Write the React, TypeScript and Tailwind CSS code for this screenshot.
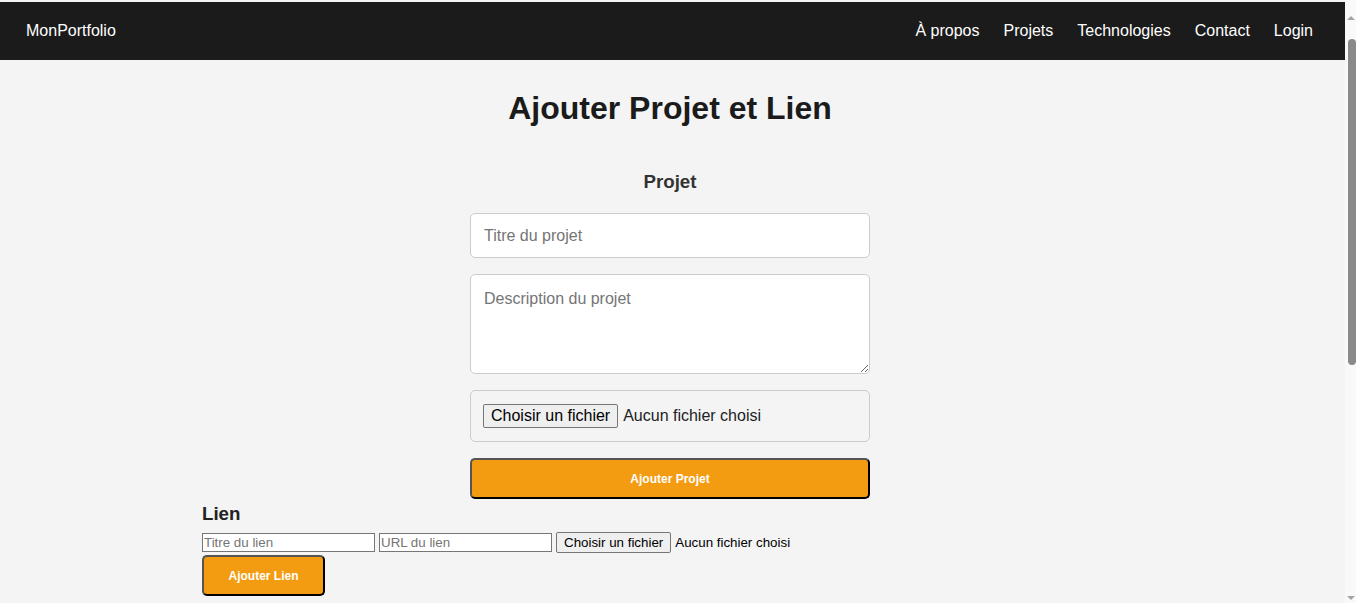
export default function App() {
  return (
    <div className="flex min-h-[603px] bg-[#f4f4f4] font-['Liberation_Sans',Arial,sans-serif] text-[#222]">
      <div className="flex-1 pt-[2px]">
        {/* barre de navigation */}
        <nav className="flex h-[58px] items-center justify-between bg-[#1b1b1b] pl-[26px] pr-[32px] text-[16px] text-white">
          <span>MonPortfolio</span>
          <ul className="flex items-center gap-[24px]">
            <li>À propos</li>
            <li>Projets</li>
            <li>Technologies</li>
            <li>Contact</li>
            <li>Login</li>
          </ul>
        </nav>

        <main className="ml-[202px] w-[936px]">
          <h1 className="mt-[30px] text-center text-[32px] font-bold leading-[37px] text-[#1b1b1b]">
            Ajouter Projet et Lien
          </h1>

          {/* formulaire projet */}
          <form className="mx-auto mt-[44px] flex w-[400px] flex-col">
            <h3 className="text-center text-[18.72px] font-bold leading-[22px] text-[#333]">
              Projet
            </h3>
            <input
              placeholder="Titre du projet"
              className="mt-[20px] h-[45px] rounded-[5px] border border-[#ccc] bg-white px-[13px] text-[16px] outline-none placeholder:text-[#757575]"
            />
            <textarea
              placeholder="Description du projet"
              className="mt-[16px] h-[100px] rounded-[5px] border border-[#ccc] bg-white px-[13px] pt-[12px] text-[16px] outline-none placeholder:text-[#757575]"
            />
            <div className="mt-[16px] flex h-[52px] items-center gap-[5px] rounded-[5px] border border-[#ccc] bg-[#f4f4f4] px-[12px]">
              <span className="flex h-[24px] items-center rounded-[2px] border border-[#767676] bg-[#efefef] px-[7px] text-[16px] text-black">
                Choisir un fichier
              </span>
              <span className="text-[16px] text-[#222]">Aucun fichier choisi</span>
            </div>
            <button
              type="button"
              className="mt-[16px] h-[41px] rounded-[5px] border-2 border-black border-t-[#555] border-l-[#555] bg-[#f39c12] text-[12px] font-bold text-white"
            >
              Ajouter Projet
            </button>
          </form>

          {/* formulaire lien */}
          <form className="mt-[4px] flex flex-col items-start">
            <h3 className="text-[18.72px] font-bold leading-[22px] text-[#222]">Lien</h3>
            <div className="mt-[7px] flex items-center gap-[4px] text-[13.33px]">
              <input
                placeholder="Titre du lien"
                className="h-[19px] w-[173px] border border-[#767676] bg-white px-[1px] outline-none placeholder:text-[#757575]"
              />
              <input
                placeholder="URL du lien"
                className="h-[19px] w-[173px] border border-[#767676] bg-white px-[1px] outline-none placeholder:text-[#757575]"
              />
              <span className="flex h-[21px] items-center rounded-[2px] border border-[#767676] bg-[#efefef] px-[7px] text-black">
                Choisir un fichier
              </span>
              <span className="text-black">Aucun fichier choisi</span>
            </div>
            <button
              type="button"
              className="mt-[2px] h-[41px] w-[123px] rounded-[5px] border-2 border-black border-t-[#555] border-l-[#555] bg-[#f39c12] text-[12px] font-bold text-white"
            >
              Ajouter Lien
            </button>
          </form>
        </main>
      </div>

      {/* barre de défilement du navigateur */}
      <aside className="flex w-[11px] flex-col items-center bg-[#f9f9f9] pt-[16px] pb-[3px]">
        <span className="h-0 w-0 border-x-[4px] border-b-[4px] border-x-transparent border-b-[#a3a3a3]" />
        <span className="mt-[19px] ml-[3px] h-[326px] w-[8px] rounded-[4px] bg-[#8a8a8a]" />
        <span className="mt-auto h-0 w-0 border-x-[4px] border-t-[4px] border-x-transparent border-t-[#a3a3a3]" />
      </aside>
    </div>
  )
}
